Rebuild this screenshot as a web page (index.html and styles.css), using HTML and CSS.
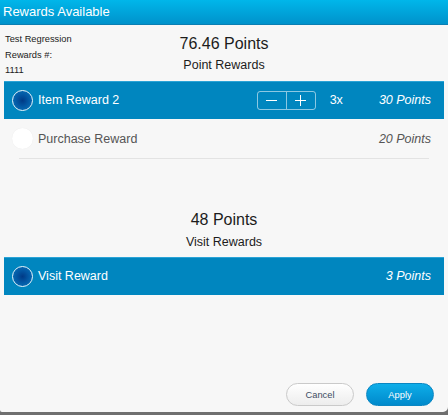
FILE: index.html
```html
<!DOCTYPE html>
<html lang="en">
<head>
    <meta charset="UTF-8">
    <meta name="viewport" content="width=device-width, initial-scale=1.0">
    <title>Rewards Available</title>
    <link rel="stylesheet" href="styles.css">
</head>
<body>
    <div class="modal">
        <header class="modal-header">Rewards Available</header>

        <div class="summary">
            <div class="member">
                <div>Test Regression</div>
                <div>Rewards #:</div>
                <div>1111</div>
            </div>
            <div class="totals">
                <div class="total-points">76.46 Points</div>
                <div class="total-label">Point Rewards</div>
            </div>
            <div></div>
        </div>

        <div class="reward-list">
            <div class="reward selected">
                <span class="radio"></span>
                <span class="reward-name">Item Reward 2</span>
                <div class="stepper">
                    <button class="step">
                        <svg width="11" height="11" viewBox="0 0 11 11"><line x1="0" y1="5.5" x2="11" y2="5.5" stroke="#fff" stroke-width="1"/></svg>
                    </button>
                    <button class="step">
                        <svg width="11" height="11" viewBox="0 0 11 11"><line x1="0" y1="5.5" x2="11" y2="5.5" stroke="#fff" stroke-width="1"/><line x1="5.5" y1="0" x2="5.5" y2="11" stroke="#fff" stroke-width="1"/></svg>
                    </button>
                </div>
                <span class="qty">3x</span>
                <span class="reward-points">30 Points</span>
            </div>
            <div class="reward">
                <span class="radio"></span>
                <span class="reward-name">Purchase Reward</span>
                <span class="reward-points">20 Points</span>
            </div>
            <div class="divider"></div>
        </div>

        <div class="totals section">
            <div class="total-points">48 Points</div>
            <div class="total-label">Visit Rewards</div>
        </div>

        <div class="reward-list">
            <div class="reward selected">
                <span class="radio"></span>
                <span class="reward-name">Visit Reward</span>
                <span class="reward-points">3 Points</span>
            </div>
        </div>

        <footer class="modal-footer">
            <button class="btn btn-cancel">Cancel</button>
            <button class="btn btn-apply">Apply</button>
        </footer>
    </div>
</body>
</html>
```

FILE: styles.css
```css
:root {
    --row-blue: #0086bf;
    --page-bg: #f7f7f7;
    --text-dark: #1c1c1c;
    --text-gray: #555;
}

html, body {
    margin: 0;
    padding: 0;
    height: 100%;
}

body {
    font-family: 'Liberation Sans', Arial, sans-serif;
    background-color: #6f6f6f;
    color: var(--text-dark);
    overflow: hidden;
}

.modal {
    height: 412px;
    background-color: var(--page-bg);
    display: flex;
    flex-direction: column;
    border-bottom-right-radius: 5px;
    border-bottom-left-radius: 2px;
}

.modal-header {
    height: 25px;
    box-sizing: border-box;
    padding: 0 3px;
    line-height: 24px;
    font-size: 13px;
    color: white;
    background: linear-gradient(#00b6ea, #0092cb);
    border-bottom: 1px solid #0a7fb3;
}

.summary {
    height: 56px;
    box-sizing: border-box;
    padding-top: 7px;
    display: grid;
    grid-template-columns: 1fr auto 1fr;
}

.member {
    padding-left: 5px;
    font-size: 9.3px;
    line-height: 15.5px;
    color: #222;
}

.totals {
    text-align: center;
    padding-top: 2px;
}

.totals.section {
    margin-top: 51px;
    padding-top: 0;
    height: 47px;
}

.total-points {
    font-size: 16px;
    line-height: 20px;
}

.total-label {
    font-size: 12.5px;
    line-height: 20px;
    margin-top: 1px;
}

.section .total-label {
    margin-top: 2px;
}

.reward-list {
    margin: 0 4px;
}

.reward {
    height: 39px;
    display: flex;
    align-items: center;
    padding: 0 13px 0 8px;
    font-size: 12.5px;
    color: var(--text-gray);
}

.reward.selected {
    height: 38px;
    background-color: var(--row-blue);
    color: white;
    box-shadow: inset 0 1px 0 #2aa3d6;
}

.radio {
    width: 21px;
    height: 21px;
    box-sizing: border-box;
    border-radius: 50%;
    background-color: white;
    box-shadow: 0 0 1px rgba(0, 0, 0, 0.08);
    margin-right: 5px;
    flex-shrink: 0;
}

.selected .radio {
    border: 1.5px solid #e8f4fa;
    background: radial-gradient(circle, #003a86 0%, #0358a4 45%, #0a78bd 100%);
}

.reward-name {
    flex: 1;
}

.stepper {
    display: flex;
    width: 59px;
    height: 19px;
    box-sizing: border-box;
    border: 1px solid rgba(255, 255, 255, 0.55);
    border-radius: 3px;
}

.step {
    flex: 1;
    padding: 0;
    border: none;
    background: none;
    display: flex;
    align-items: center;
    justify-content: center;
}

.step + .step {
    border-left: 1px solid rgba(255, 255, 255, 0.55);
}

.qty {
    margin-left: 14px;
}

.reward-points {
    margin-left: 36px;
    font-style: italic;
}

.divider {
    height: 1px;
    background-color: #e3e3e3;
    margin: 0 15px;
}

.modal-footer {
    margin-top: auto;
    display: flex;
    justify-content: flex-end;
    gap: 12px;
    padding: 0 14px 6px 0;
}

.btn {
    width: 68px;
    height: 23px;
    border-radius: 12px;
    font-family: inherit;
    font-size: 9.3px;
    padding: 0;
}

.btn-cancel {
    background: linear-gradient(#ffffff, #ededed);
    border: 1px solid #cacaca;
    color: #3d4d63;
}

.btn-apply {
    background: linear-gradient(#0eaee9, #0089cb);
    border: 1px solid #0a86c2;
    color: white;
}
```
